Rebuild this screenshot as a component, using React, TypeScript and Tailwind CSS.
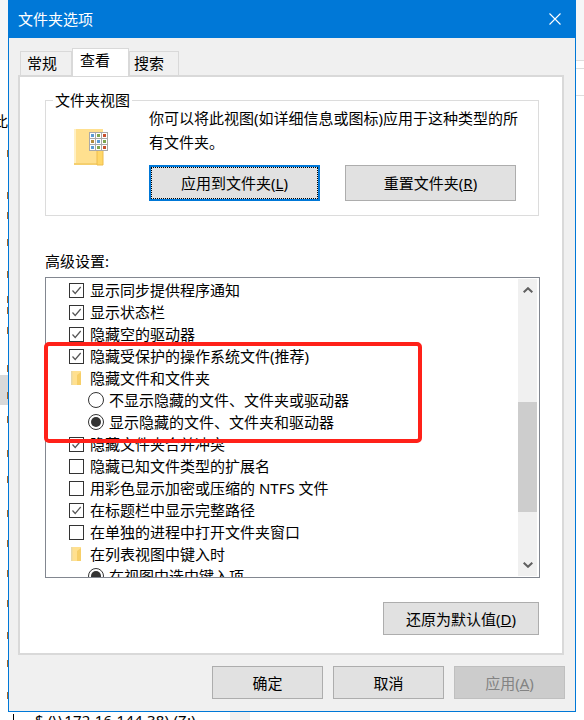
import { Fragment } from 'react'

type Row =
  | { kind: 'check'; label: string; checked: boolean }
  | { kind: 'folder'; label: string }
  | { kind: 'radio'; label: string; checked: boolean }

const rows: Row[] = [
  { kind: 'check', label: '显示同步提供程序通知', checked: true },
  { kind: 'check', label: '显示状态栏', checked: true },
  { kind: 'check', label: '隐藏空的驱动器', checked: true },
  { kind: 'check', label: '隐藏受保护的操作系统文件(推荐)', checked: true },
  { kind: 'folder', label: '隐藏文件和文件夹' },
  { kind: 'radio', label: '不显示隐藏的文件、文件夹或驱动器', checked: false },
  { kind: 'radio', label: '显示隐藏的文件、文件夹和驱动器', checked: true },
  { kind: 'check', label: '隐藏文件夹合并冲突', checked: true },
  { kind: 'check', label: '隐藏已知文件类型的扩展名', checked: false },
  { kind: 'check', label: '用彩色显示加密或压缩的 NTFS 文件', checked: false },
  { kind: 'check', label: '在标题栏中显示完整路径', checked: true },
  { kind: 'check', label: '在单独的进程中打开文件夹窗口', checked: false },
  { kind: 'folder', label: '在列表视图中键入时' },
  { kind: 'radio', label: '在视图中选中键入项', checked: true },
]

// bits of the window behind the dialog that show along its left edge
const leftMarks = [150, 192, 212, 239, 271, 296, 307, 327, 365, 392, 416, 450, 476, 510, 540, 570, 600, 632, 660, 692]

function FolderBig() {
  const cells = ['#5b9bd5', '#7fa650', '#c8502e', '#b08a3c', '#5b9bd5', '#7fa650', '#5b9bd5', '#7fa650', '#c8502e']
  return (
    <svg width="36" height="38" viewBox="0 0 36 38" className="shrink-0">
      <rect x="1" y="1" width="29" height="36" fill="#ffe08f" />
      <rect x="1" y="1" width="2" height="36" fill="#fff0c4" />
      <rect x="1" y="35" width="29" height="2" fill="#f5cf6e" />
      <path d="M24 37 V23 q0 -3 3 -3 t3 3 V37 Z" fill="#ffd768" stroke="#eebd4c" strokeWidth="1" />
      <rect x="16.5" y="4.5" width="18" height="18" fill="#ffffff" stroke="#a9a9a9" />
      <path d="M22.5 4.5 V22.5 M28.5 4.5 V22.5 M16.5 10.5 H34.5 M16.5 16.5 H34.5" stroke="#a9a9a9" />
      {cells.map((c, i) => (
        <rect key={i} x={18 + (i % 3) * 6} y={6 + Math.floor(i / 3) * 6} width="3" height="3" fill={c} />
      ))}
    </svg>
  )
}

function FolderSmall() {
  return (
    <svg width="10" height="14" viewBox="0 0 10 14" className="ml-[25px] shrink-0">
      <rect x="0" y="0" width="10" height="14" fill="#ffe08f" />
      <rect x="0" y="0" width="1.5" height="14" fill="#e8d8a8" />
      <path d="M6 14 V4 L10 1 V14 Z" fill="#f7cf68" />
    </svg>
  )
}

function Check({ checked }: { checked: boolean }) {
  return (
    <span className="ml-[23px] flex h-[15px] w-[15px] shrink-0 items-center justify-center border border-[#333333] bg-white">
      {checked && (
        <svg width="13" height="13" viewBox="0 0 13 13">
          <path d="M2.5 6.5 L5.2 9.5 L10.7 3" fill="none" stroke="#555555" strokeWidth="1.2" />
        </svg>
      )}
    </span>
  )
}

function Radio({ checked }: { checked: boolean }) {
  return (
    <span className="ml-[42px] flex h-4 w-4 shrink-0 items-center justify-center rounded-full border border-[#333333] bg-white">
      {checked && <span className="h-[10px] w-[10px] rounded-full bg-[#333333]" />}
    </span>
  )
}

function Button({
  children,
  className = '',
}: {
  children: React.ReactNode
  className?: string
}) {
  return (
    <button className={`flex items-center justify-center border border-[#adadad] bg-[#e1e1e1] text-[15px] leading-5 text-black ${className}`}>
      {children}
    </button>
  )
}

function Mnemonic({ text, letter }: { text: string; letter: string }) {
  return (
    <Fragment>
      {text}(<span className="underline">{letter}</span>)
    </Fragment>
  )
}

export default function App() {
  return (
    <div className="relative h-[720px] w-[584px] overflow-hidden bg-white font-['Noto_Sans','Noto_Sans_CJK_SC',sans-serif] text-[15px] leading-5 text-black">
      <div className="flex h-[712px]">
        {/* window behind, left edge */}
        <div className="relative w-2 overflow-hidden bg-white">
          <div className="h-[60px] bg-[#f5f6f7]" />
          <div className="mt-[315px] h-[30px] bg-[#d9d9d9]" />
          <span className="absolute left-[-7px] top-[111px]">此</span>
          {leftMarks.map(y => (
            <div key={y} className="absolute left-[7px] h-[7px] w-px bg-[#a5672a]" style={{ top: y }} />
          ))}
        </div>

        {/* dialog */}
        <div className="flex w-[568px] flex-col border-x border-b border-[#0078d7] bg-[#f0f0f0]">
          <div className="-mx-px flex h-[38px] shrink-0 items-center justify-between bg-[#0078d7] pb-px pl-[10px] pr-[15px] text-white">
            <span>文件夹选项</span>
            <svg width="12" height="12" viewBox="0 0 12 12">
              <path d="M0.5 0.5 L11.5 11.5 M11.5 0.5 L0.5 11.5" stroke="#ffffff" strokeWidth="1.1" />
            </svg>
          </div>

          {/* tabs */}
          <div className="relative z-10 ml-[11px] mt-[10px] flex h-[28px] items-end">
            <div className="flex h-[25px] w-[52px] items-center border border-b-0 border-[#d9d9d9] pb-[2px] pl-[6px]">常规</div>
            <div className="flex h-[28px] w-[57px] items-center border border-b-0 border-[#d9d9d9] bg-white pb-[5px] pl-[7px]">查看</div>
            <div className="flex h-[25px] w-[50px] items-center border border-b-0 border-[#d9d9d9] pb-[2px] pl-[4px]">搜索</div>
          </div>

          {/* tab page */}
          <div className="relative -mt-px ml-[9px] h-[580px] w-[546px] border-2 border-[#d9d9d9] bg-white">
            <fieldset className="ml-[25px] mt-[13px] h-[126px] w-[494px] border border-[#dcdcdc]">
              <legend className="ml-[7px] px-[2px]">文件夹视图</legend>
              <div className="flex">
                <div className="ml-[27px] mt-[18px]">
                  <FolderBig />
                </div>
                <div className="ml-[40px] flex flex-col">
                  <p className="mt-[-4px] w-[372px] leading-6">你可以将此视图(如详细信息或图标)应用于这种类型的所有文件夹。</p>
                  <div className="mt-[11px] flex gap-[25px]">
                    <button className="h-[36px] w-[171px] border-2 border-[#0078d7] bg-[#e1e1e1]">
                      <span className="flex h-full w-full items-center justify-center border border-dotted border-black">
                        <Mnemonic text="应用到文件夹" letter="L" />
                      </span>
                    </button>
                    <Button className="h-[36px] w-[171px]">
                      <Mnemonic text="重置文件夹" letter="R" />
                    </Button>
                  </div>
                </div>
              </div>
            </fieldset>

            <p className="ml-[25px] mt-[35px]">高级设置:</p>

            {/* advanced list */}
            <div className="ml-[25px] mt-[6px] flex h-[301px] w-[495px] border border-[#828790] bg-white">
              <div className="min-w-0 flex-1 overflow-hidden pt-px">
                {rows.map(row => (
                  <div key={row.label} className="flex h-[22px] items-center whitespace-nowrap">
                    {row.kind === 'check' && <Check checked={row.checked} />}
                    {row.kind === 'folder' && <FolderSmall />}
                    {row.kind === 'radio' && <Radio checked={row.checked} />}
                    <span className={row.kind === 'radio' ? 'ml-[5px]' : row.kind === 'folder' ? 'ml-[9px]' : 'ml-[6px]'}>{row.label}</span>
                  </div>
                ))}
              </div>
              <div className="my-px mr-[2px] flex w-[19px] shrink-0 flex-col bg-[#f0f0f0]">
                <div className="flex h-[123px] justify-center pt-[8px]">
                  <svg width="10" height="6" viewBox="0 0 10 6">
                    <path d="M0.7 5.3 L5 1.2 L9.3 5.3" fill="none" stroke="#606060" strokeWidth="2" />
                  </svg>
                </div>
                <div className="h-[110px] bg-[#cdcdcd]" />
                <div className="flex flex-1 items-end justify-center pb-[8px]">
                  <svg width="10" height="6" viewBox="0 0 10 6">
                    <path d="M0.7 0.7 L5 4.8 L9.3 0.7" fill="none" stroke="#606060" strokeWidth="2" />
                  </svg>
                </div>
              </div>
            </div>

            <div className="ml-[363px] mt-[24px]">
              <Button className="h-[33px] w-[156px]">
                <Mnemonic text="还原为默认值" letter="D" />
              </Button>
            </div>
          </div>

          {/* footer buttons */}
          <div className="ml-[203px] mt-[11px] flex gap-[10px]">
            <Button className="h-[33px] w-[111px]">确定</Button>
            <Button className="h-[33px] w-[111px]">取消</Button>
            <button className="flex h-[33px] w-[111px] items-center justify-center border border-[#bfbfbf] bg-[#cccccc] text-[#838383]">
              <Mnemonic text="应用" letter="A" />
            </button>
          </div>
        </div>

        {/* window behind, right edge */}
        <div className="flex-1 bg-white">
          <div className="h-[60px] bg-[#f5f6f7]" />
          <div className="h-px bg-[#dddddd]" />
          <div className="mt-[7px] h-px bg-[#dddddd]" />
          <div className="mt-[26px] h-px bg-[#dddddd]" />
        </div>
      </div>

      {/* window behind, only the top of the line shows */}
      <div className="flex h-2 overflow-hidden">
        <div className="ml-[13px] mt-[2px] h-full w-px bg-black" />
        <span className="ml-[21px] mt-[-2px] w-[195px] whitespace-nowrap tracking-[0.2px]">$ (\\172.16.144.38) (Z:)</span>
        <div className="h-full w-[20px] bg-[#f0f0f0]" />
      </div>

      {/* red highlight drawn over the screenshot */}
      <div className="absolute left-[44px] top-[342px] h-[101px] w-[378px] rounded-[5px] border-[4px] border-[#ff2119]" />
    </div>
  )
}
